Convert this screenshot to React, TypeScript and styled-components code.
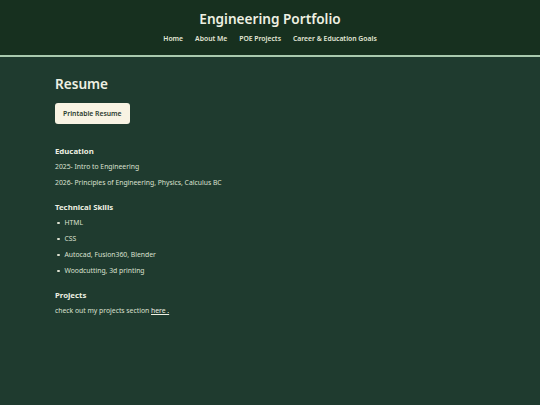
import { createGlobalStyle, styled } from 'styled-components';

const Global = createGlobalStyle`
  html, body {
    margin: 0;
    padding: 0;
    background: #1f3b2f;
    font-family: "Noto Sans", "Open Sans", sans-serif;
    color: #dde1d1;
  }
`;

const Header = styled.header`
  background: #17301f;
  border-bottom: 2px solid #a9c9ae;
  height: 57px;
  box-sizing: border-box;
  padding-top: 9px;
  display: flex;
  flex-direction: column;
  align-items: center;
`;

const Title = styled.h1`
  margin: 0;
  font-size: 13.6px;
  font-weight: 600;
  line-height: 20px;
  color: #eef0e2;
`;

const Nav = styled.nav`
  display: flex;
  gap: 12px;
  margin-top: 5px;
`;

const NavLink = styled.a`
  font-size: 6.8px;
  font-weight: 600;
  color: #e4e8d8;
  text-decoration: none;
  line-height: 10px;
`;

const Main = styled.main`
  padding: 16px 55px;
`;

const PageTitle = styled.h2`
  margin: 0;
  font-size: 13.6px;
  font-weight: 600;
  line-height: 22px;
  color: #eef0e2;
`;

const Button = styled.button`
  display: block;
  margin-top: 8px;
  background: #f8f3e3;
  color: #2a3a2e;
  border: none;
  border-radius: 3px;
  height: 21px;
  padding: 0 8px;
  font-family: inherit;
  font-size: 6.8px;
  font-weight: 600;
`;

const Section = styled.section`
  margin-top: 19px;
  & + & {
    margin-top: 8px;
  }
`;

const Heading = styled.h3`
  margin: 0;
  font-size: 7.8px;
  font-weight: 700;
  line-height: 16px;
  color: #eef0e2;
`;

const Line = styled.p`
  margin: 0;
  font-size: 6.8px;
  line-height: 16px;
`;

const List = styled.ul`
  margin: 0;
  padding: 0 0 0 2px;
  list-style: none;
`;

const Item = styled.li`
  font-size: 6.8px;
  line-height: 16px;
  display: flex;
  align-items: center;
  gap: 5px;
  &::before {
    content: "";
    width: 2.5px;
    height: 2.5px;
    border-radius: 50%;
    background: #dde1d1;
  }
`;

const Link = styled.a`
  color: #eef0e2;
  text-decoration: underline;
`;

export default function App() {
  return (
    <>
      <Global />
      <Header>
        <Title>Engineering Portfolio</Title>
        <Nav>
          <NavLink href="#">Home</NavLink>
          <NavLink href="#">About Me</NavLink>
          <NavLink href="#">POE Projects</NavLink>
          <NavLink href="#">Career &amp; Education Goals</NavLink>
        </Nav>
      </Header>
      <Main>
        <PageTitle>Resume</PageTitle>
        <Button>Printable Resume</Button>
        <Section>
          <Heading>Education</Heading>
          <Line>2025- Intro to Engineering</Line>
          <Line>2026- Principles of Engineering, Physics, Calculus BC</Line>
        </Section>
        <Section>
          <Heading>Technical Skills</Heading>
          <List>
            <Item>HTML</Item>
            <Item>CSS</Item>
            <Item>Autocad, Fusion360, Blender</Item>
            <Item>Woodcutting, 3d printing</Item>
          </List>
        </Section>
        <Section>
          <Heading>Projects</Heading>
          <Line>
            check out my projects section <Link href="#">here .</Link>
          </Line>
        </Section>
      </Main>
    </>
  );
}
